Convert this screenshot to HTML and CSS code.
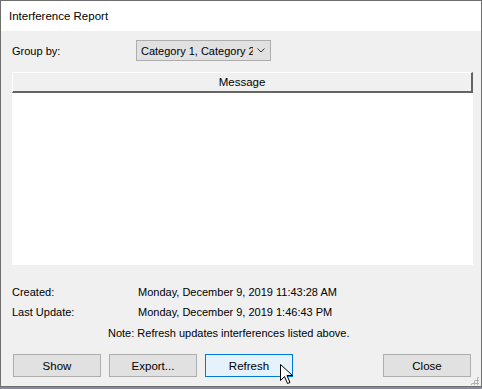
FILE: index.html
```html
<!DOCTYPE html>
<html lang="en">
<head>
  <meta charset="UTF-8">
  <title>Interference Report</title>
  <link rel="stylesheet" href="styles.css">
</head>
<body>
  <div class="dialog">
    <div class="titlebar">Interference Report</div>
    <div class="content">
      <div class="group-row">
        <span class="label">Group by:</span>
        <div class="combo">
          <span class="combo-text">Category 1, Category 2</span>
          <svg class="chev" width="8" height="5" viewBox="0 0 8 5"><polyline points="0.5,0.5 4,4 7.5,0.5" fill="none" stroke="#333" stroke-width="1"/></svg>
        </div>
      </div>

      <div class="list">
        <div class="list-head">Message</div>
        <div class="list-body"></div>
      </div>

      <div class="info">
        <div class="info-row"><span class="label">Created:</span><span>Monday, December 9, 2019 11:43:28 AM</span></div>
        <div class="info-row"><span class="label">Last Update:</span><span>Monday, December 9, 2019 1:46:43 PM</span></div>
        <div class="note">Note: Refresh updates interferences listed above.</div>
      </div>

      <div class="buttons">
        <button class="btn">Show</button>
        <button class="btn">Export...</button>
        <button class="btn btn-hot">Refresh
          <svg class="cursor" width="13" height="21" viewBox="0 0 13 21"><path d="M0.5 0.5 L0.5 16.5 L4.5 12.5 L7.5 19.5 L10 18.5 L7 11.5 L12.5 11.5 Z" fill="#fff" stroke="#000" stroke-width="1" stroke-linejoin="miter"/></svg>
        </button>
        <span class="spacer"></span>
        <button class="btn">Close</button>
      </div>
    </div>
    <div class="grip"></div>
  </div>
  <div class="taskbar"></div>
</body>
</html>
```

FILE: styles.css
```css
html, body { margin: 0; padding: 0; }
body { width: 482px; height: 389px; background: #cfcfcf; font-family: "Liberation Sans", Arial, sans-serif; font-size: 11px; color: #000; overflow: hidden; }

.dialog { position: relative; box-sizing: border-box; width: 482px; height: 387px; border: 1px solid #6f6f6f; background: #f0f0f0; display: flex; flex-direction: column; }
.titlebar { height: 30px; line-height: 30px; background: #fff; padding-left: 8px; font-size: 11.5px; }
.content { padding: 9px 8px 0 11px; display: flex; flex-direction: column; }

.group-row { display: flex; align-items: center; height: 21px; }
.group-row .label { width: 124px; }
.combo { box-sizing: border-box; width: 135px; height: 21px; border: 1px solid #adadad; background: #e1e1e1; display: flex; align-items: center; padding-left: 4px; overflow: hidden; }
.combo-text { flex: 1; white-space: nowrap; overflow: hidden; }
.chev { margin: 0 5px 0 4px; flex: none; }

.list { margin-top: 11px; width: 461px; height: 193px; display: flex; flex-direction: column; background: #fff; }
.list-head { box-sizing: border-box; height: 21px; line-height: 19px; font-size: 11.5px; text-align: center; background: #f0f0f0; border-top: 1px solid #fff; border-left: 1px solid #fff; border-bottom: 2px solid #646464; border-right: 2px solid #646464; }
.list-body { flex: 1; background: #fff; }

.info { margin-top: 17px; }
.info-row { display: flex; height: 20px; line-height: 20px; }
.info-row .label { width: 126px; }
.note { margin-top: 1px; height: 20px; line-height: 20px; padding-left: 96px; }

.buttons { margin-top: 11px; display: flex; gap: 8px; padding: 0 2px 0 1px; }
.btn { position: relative; box-sizing: border-box; width: 88px; height: 23px; border: 1px solid #adadad; background: #e1e1e1; font-family: inherit; font-size: 11.5px; color: #000; padding: 0; }
.btn-hot { border-color: #0078d7; background: #e5f1fb; }
.spacer { flex: 1; }
.cursor { position: absolute; left: 74px; top: 9px; }

.grip { position: absolute; right: 2px; bottom: 1px; width: 9px; height: 9px;
  background: radial-gradient(circle, #b0b0b0 1px, transparent 1.2px) 0 0 / 3px 3px; clip-path: polygon(100% 0, 100% 100%, 0 100%); }
.taskbar { height: 2px; background: #8a8a9c; }
```
